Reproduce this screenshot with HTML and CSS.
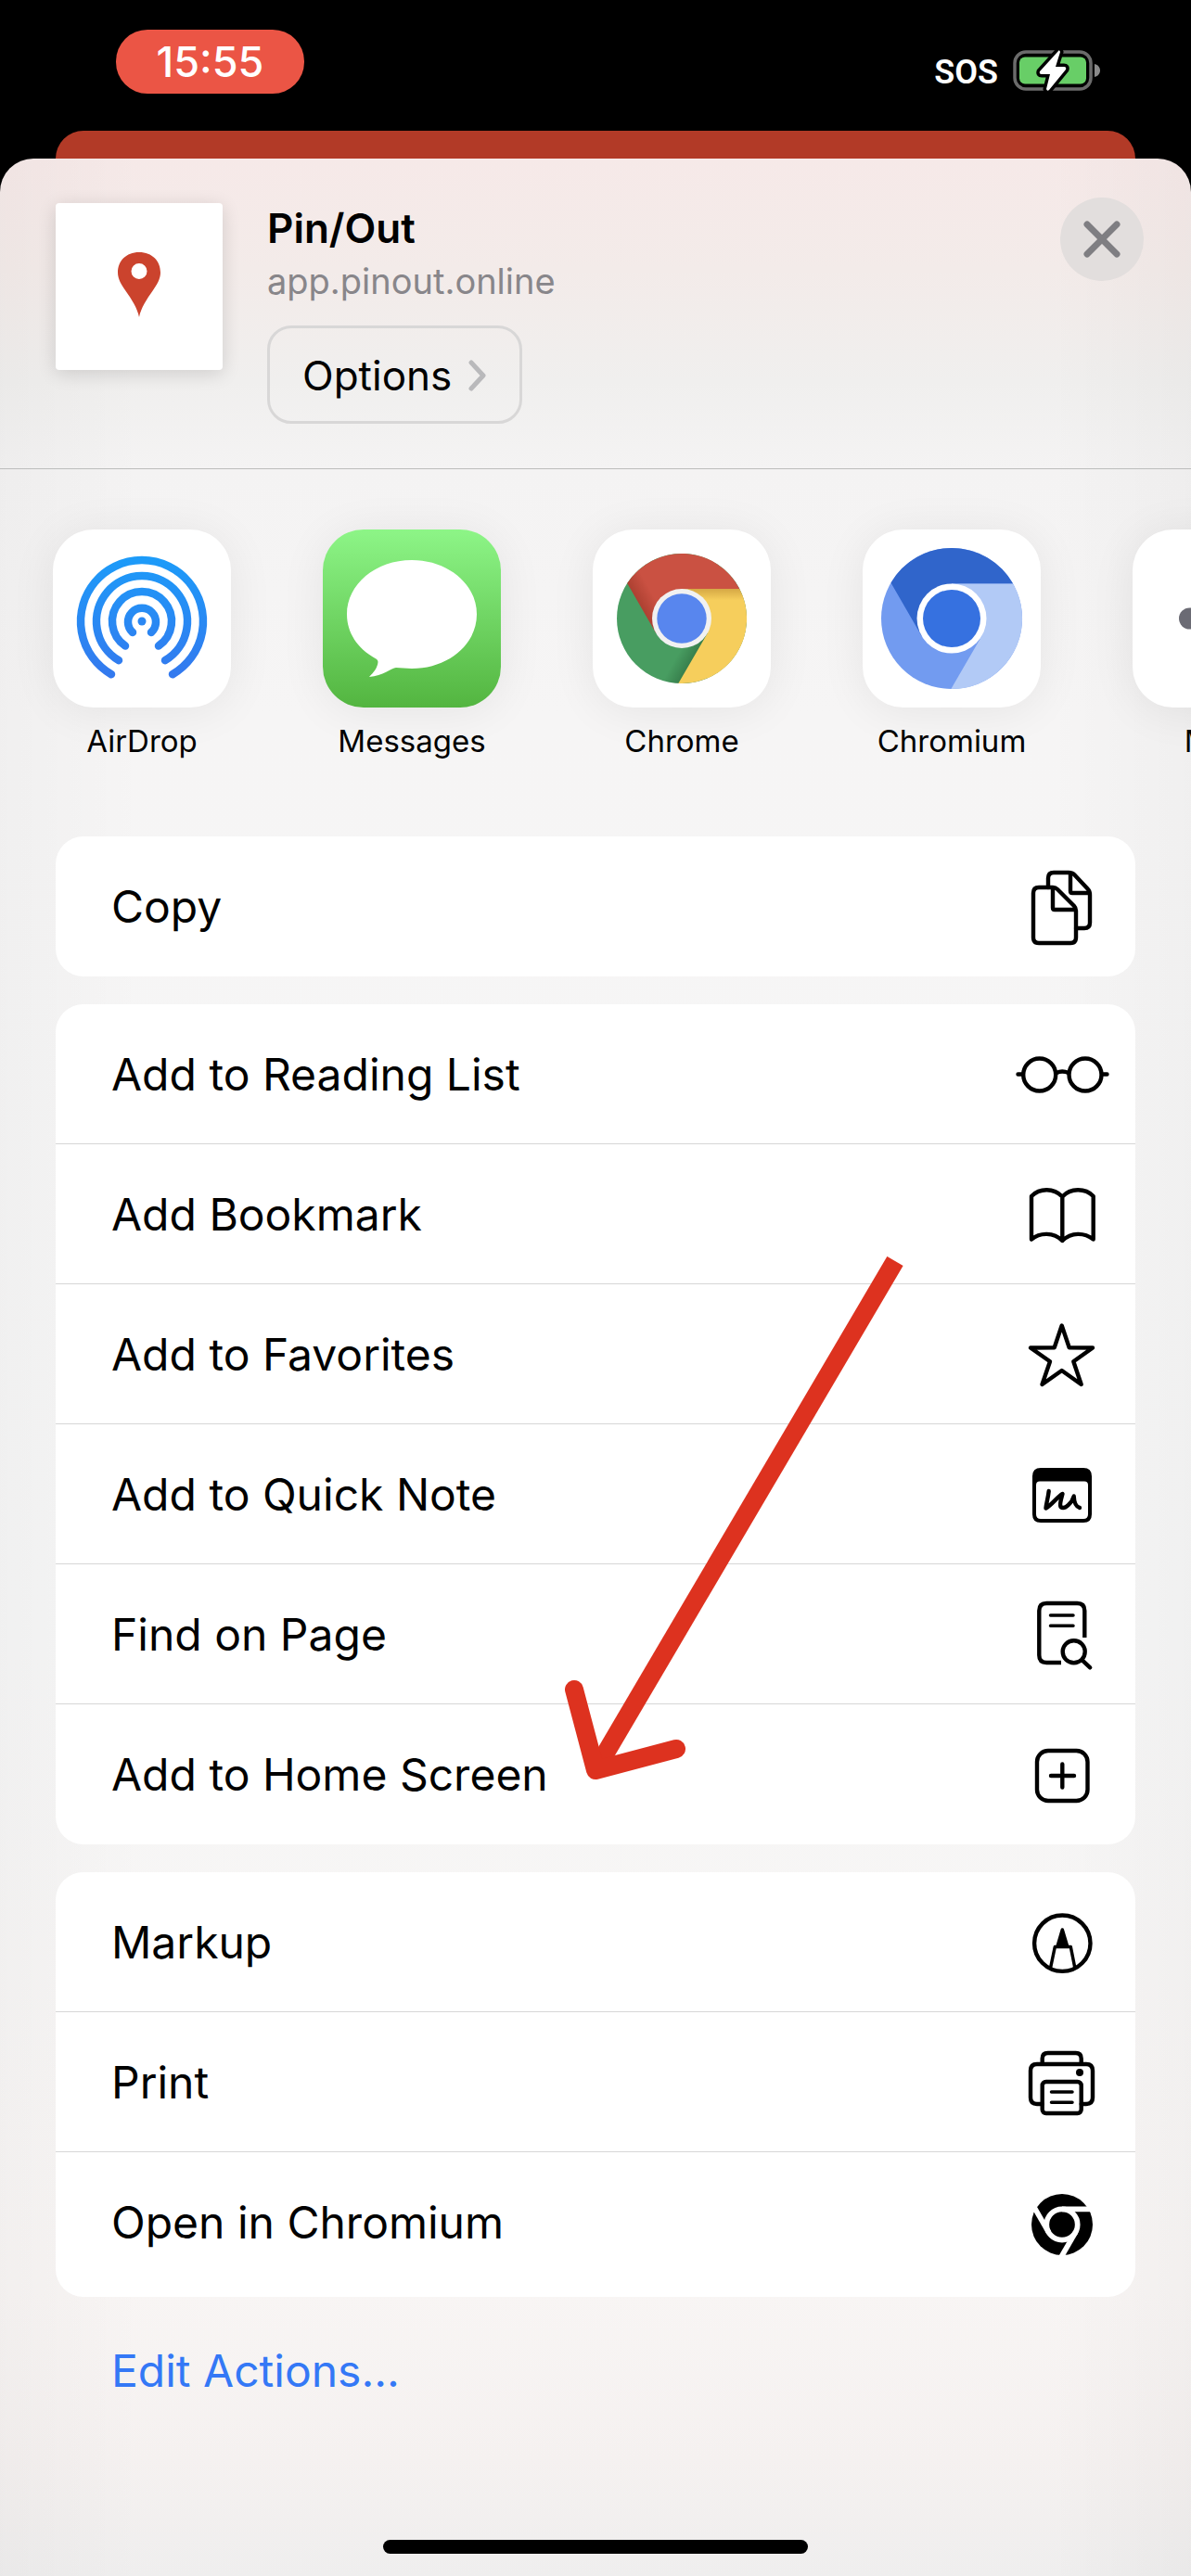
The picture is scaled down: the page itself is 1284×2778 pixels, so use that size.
FILE: index.html
```html
<!DOCTYPE html>
<html lang="en">
  <head>
    <meta charset="UTF-8" />
    <meta name="viewport" content="width=device-width, initial-scale=1.0" />
    <title>Pin/Out</title>
    <link rel="stylesheet" href="styles.css">
  </head>
  <body>
    <div class="status">
      <span class="time">15:55</span>
      <div class="status_right">
        <span class="sos">SOS</span>
        <svg class="battery" width="96" height="46" viewBox="0 0 96 46">
          <rect x="2" y="3" width="82" height="40" rx="12" fill="none" stroke="#6b6b6b" stroke-width="3.5" />
          <rect x="7" y="8.500" width="72" height="29" rx="6" fill="#68ce67" />
          <path d="M88 16c4 1 6 4 6 7s-2 6-6 7z" fill="#8a8a8a" />
          <path d="M49 2L29 24q-1 3 2 3h9l-4 16q1 3 3 1l18-22q1-3-2-3h-9l5-16q-1-3-2-1z" fill="#fff" stroke="#000" stroke-width="7" paint-order="stroke" />
        </svg>
      </div>
    </div>
    <div class="back_page"></div>

    <main class="sheet">
      <header class="head">
        <div class="thumb">
          <svg width="46" height="70" viewBox="0 0 46 70">
            <path fill="#cb432d" fill-rule="evenodd" d="M23 0C9 0 0 9.500 0 22c0 7 4 13 8 19 7 10 13 19 15 29 2-10 8-19 15-29 4-6 8-12 8-19C46 9.500 37 0 23 0zm0 12a8.500 8.500 0 1 1 0 17 8.500 8.500 0 0 1 0-17z" />
          </svg>
        </div>
        <div class="info">
          <h1>Pin/Out</h1>
          <p>app.pinout.online</p>
          <button type="button" class="options">
            Options
            <svg width="20" height="34" viewBox="0 0 20 34">
              <path d="M3 3l13 14L3 31" fill="none" stroke="#b9b9bb" stroke-width="5" stroke-linecap="round" stroke-linejoin="round" />
            </svg>
          </button>
        </div>
        <button type="button" class="close" aria-label="Close">
          <svg width="40" height="40" viewBox="0 0 40 40">
            <path d="M4 4l32 32M36 4L4 36" stroke="#7f7e82" stroke-width="7" stroke-linecap="round" />
          </svg>
        </button>
      </header>

      <div class="apps">
        <button type="button" class="app">
          <svg class="app_icon" viewBox="0 0 192 192">
            <defs>
              <linearGradient id="air" gradientUnits="userSpaceOnUse" x1="0" y1="28" x2="0" y2="162">
                <stop offset="0" stop-color="#1c9cf9" />
                <stop offset="1" stop-color="#3478ee" />
              </linearGradient>
            </defs>
            <g fill="none" stroke="url(#air)" stroke-width="8.500" stroke-linecap="round">
              <path d="M63 156.200A66 66 0 1 1 129 156.200" />
              <path d="M71 141.200A49 49 0 1 1 121 141.200" />
              <path d="M78 125.500A32 32 0 1 1 114 125.500" />
              <path d="M86 111A15 15 0 1 1 106 111" />
            </g>
            <circle cx="96" cy="99" r="4.500" fill="#2a87f3" />
          </svg>
          <span>AirDrop</span>
        </button>
        <button type="button" class="app">
          <svg class="app_icon messages" viewBox="0 0 192 192">
            <path fill="#fff" d="M96 33c39 0 70 26 70 58.500S135 150 96 150c-6 0-12-1-17-1-5 0-14 9-29 10 5-5 9-10 9.500-16 0-2-1-3-3-4C37 128 26 111 26 91.500 26 59 57 33 96 33z" />
          </svg>
          <span>Messages</span>
        </button>
        <button type="button" class="app">
          <svg class="app_icon" viewBox="0 0 192 192">
            <defs>
              <linearGradient id="shadeY" x1="0" y1="0" x2="0" y2="1">
                <stop offset="0" stop-color="#d5a845" />
                <stop offset="0.120" stop-color="#f6ce5c" />
              </linearGradient>
              <linearGradient id="shadeR" gradientUnits="userSpaceOnUse" x1="52" y1="85" x2="68" y2="76">
                <stop offset="0" stop-color="#ac4031" />
                <stop offset="1" stop-color="#ca5142" />
              </linearGradient>
              <linearGradient id="shadeG" gradientUnits="userSpaceOnUse" x1="108" y1="139" x2="94" y2="131">
                <stop offset="0" stop-color="#38804d" />
                <stop offset="1" stop-color="#489d61" />
              </linearGradient>
            </defs>
            <circle cx="96" cy="96" r="70" fill="url(#shadeG)" />
            <path fill="url(#shadeR)" d="M158.300 64A70 70 0 0 0 37.200 58L68.300 112 96 96V64z" />
            <path fill="url(#shadeY)" d="M158.300 64A70 70 0 0 1 92.300 166L123.700 112 96 96V64z" />
            <circle cx="96" cy="96" r="32" fill="#f1f1f1" />
            <circle cx="96" cy="96" r="26.700" fill="#5886ee" />
          </svg>
          <span>Chrome</span>
        </button>
        <button type="button" class="app">
          <svg class="app_icon" viewBox="0 0 192 192">
            <circle cx="96" cy="96" r="76" fill="#729bf0" />
            <path fill="#3065cb" d="M162.200 58.500A76 76 0 0 0 30.500 57.400L63.500 114.700 96 96V58.500z" />
            <path fill="#b2caf6" d="M162.200 58.500A76 76 0 0 1 95.300 172L128.500 114.700 96 96V58.500z" />
            <circle cx="96" cy="96" r="37.500" fill="#fff" />
            <circle cx="96" cy="96" r="31" fill="#3671e0" />
          </svg>
          <span>Chromium</span>
        </button>
        <button type="button" class="app">
          <svg class="app_icon" viewBox="0 0 192 192" fill="#6b6b74">
            <circle cx="61.500" cy="96" r="11.500" />
            <circle cx="96" cy="96" r="11.500" />
            <circle cx="130.500" cy="96" r="11.500" />
          </svg>
          <span>More</span>
        </button>
      </div>

      <ul class="actions">
        <li>
          <button type="button">
            Copy
            <svg class="icon" viewBox="0 0 102 102">
              <path d="M36 31V21q0-6 6-6h16q4 0 6 2l15 16q2 2 2 6v30q0 6-6 6h-9M60 16v19q0 2 2 2h18" />
              <path d="M26 31h15q3 0 5 2l18 18q2 2 2 5v29q0 6-6 6H26q-6 0-6-6V37q0-6 6-6zM41 32v21q0 2 2 2h22" />
            </svg>
          </button>
        </li>
      </ul>

      <ul class="actions">
        <li>
          <button type="button">
            Add to Reading List
            <svg class="icon" viewBox="0 0 102 102">
              <circle cx="26.700" cy="52" r="17.500" />
              <circle cx="76" cy="52" r="17.500" />
              <path d="M45 50q6-3 13 0M3.500 51.500H8M95 51.500h4.500" />
            </svg>
          </button>
        </li>
        <li>
          <button type="button">
            Add Bookmark
            <svg class="icon" viewBox="0 0 102 102">
              <path d="M18 32C27 23 42 23 51.300 32.500 60 23 76 23 84.700 32v46.500C75 71 61 70.500 51.300 80 42 70.500 27 71 18 78.500zM51.300 32.500V80" />
            </svg>
          </button>
        </li>
        <li>
          <button type="button">
            Add to Favorites
            <svg class="icon" viewBox="0 0 102 102">
              <path d="M50.700 20.500L58.700 44.300 84 44.500 63.300 59.300 71.700 84 50.700 69 29.500 84 38 59.300 17 44.500 42.700 44.300z" />
            </svg>
          </button>
        </li>
        <li>
          <button type="button">
            Add to Quick Note
            <svg class="icon" viewBox="0 0 102 102">
              <path fill="#000" stroke="none" fill-rule="evenodd" d="M28 23h46q9 0 9 9v41q0 9-9 9H28q-9 0-9-9V32q0-9 9-9zM27 37.500q-4 0-4 4V73q0 5 5 5h46q5 0 5-5V41.500q0-4-4-4z" />
              <path d="M36.700 48C36 55 34 61 33.500 66.500 40 63 46 54 51.500 51 50 57 48 62 49.500 65 54 69 62 60 63.700 53.500 64 60 66 65 70 66" />
            </svg>
          </button>
        </li>
        <li>
          <button type="button">
            Find on Page
            <svg class="icon" viewBox="0 0 102 102">
              <path d="M75.300 55V26q0-8-8-8h-33q-8 0-8 8v48q0 8 8 8H50" stroke-linecap="butt" />
              <path class="thin" d="M38.500 31H63M38.500 42.300H63" />
              <circle cx="63.700" cy="70.300" r="12" />
              <path d="M72.700 79.300l8.500 8" />
            </svg>
          </button>
        </li>
        <li>
          <button type="button">
            Add to Home Screen
            <svg class="icon" viewBox="0 0 102 102">
              <rect x="24" y="26" width="54.500" height="54" rx="12" />
              <path d="M39 53h25M51.300 40.500v25" />
            </svg>
          </button>
        </li>
      </ul>

      <ul class="actions last">
        <li>
          <button type="button">
            Markup
            <svg class="icon" viewBox="0 0 102 102">
              <circle cx="51.300" cy="52.700" r="30.200" />
              <path class="thin" d="M38.700 78.500l4.600-22h17l4.400 22" />
              <path class="thin" d="M51.300 38L46 56h10.700z" fill="#000" />
            </svg>
          </button>
        </li>
        <li>
          <button type="button">
            Print
            <svg class="icon" viewBox="0 0 102 102">
              <path d="M29.700 75H24q-7 0-7-7V39q0-7 7-7h53q7 0 7 7v29q0 7-7 7h-5.300M29.700 31v-5q0-6 6-6h30q6 0 6 6v5" />
              <rect x="29.700" y="51" width="42" height="34" rx="4" />
              <path class="thin" d="M39.500 62H62M39.500 73.300H62" />
              <circle cx="70" cy="41" r="4" fill="#000" stroke="none" />
            </svg>
          </button>
        </li>
        <li>
          <button type="button">
            Open in Chromium
            <svg class="icon" viewBox="0 0 102 102">
              <circle cx="51" cy="54" r="33" fill="#000" stroke="none" />
              <g stroke="#fff" stroke-width="5.700" stroke-linecap="butt">
                <circle cx="51" cy="54" r="16.700" />
                <path d="M51 37.300h36" />
                <path d="M51 37.300h36" transform="rotate(120 51 54)" />
                <path d="M51 37.300h36" transform="rotate(240 51 54)" />
              </g>
            </svg>
          </button>
        </li>
      </ul>

      <button type="button" class="edit">Edit Actions...</button>
      <div class="home_bar"></div>

      <!-- pointer to Add to Home Screen -->
      <svg class="arrow" width="370" height="570" viewBox="0 0 370 570" fill="none" stroke="#dd321f" stroke-width="20">
        <path d="M356 5L33 554" />
        <path d="M10 467l23 87 87-23" stroke-linecap="round" stroke-linejoin="round" />
      </svg>
    </main>
  </body>
</html>
```

FILE: styles.css
```css
* {
  padding: 0;
  margin: 0;
  box-sizing: border-box;
}
body {
  display: flex;
  flex-direction: column;
  min-height: 100vh;
  background-color: #000;
  color: #000;
  font-family: Inter, "Liberation Sans", sans-serif;
  overflow-x: hidden;
}
ul {
  list-style: none;
}
button {
  border: 0;
  background: none;
  color: inherit;
  font: inherit;
  cursor: pointer;
}
svg {
  display: block;
  flex: none;
}

/* status bar */
.status {
  display: flex;
  justify-content: space-between;
  align-items: flex-start;
  height: 141px;
  padding: 32px 96px 0 125px;
  color: #fff;
}
.time {
  width: 203px;
  border-radius: 34px;
  background: #eb5545;
  font-size: 45px;
  font-weight: 500;
  line-height: 69px;
  text-align: center;
}
.status_right {
  display: flex;
  align-items: center;
  gap: 16px;
  padding-top: 20px;
}
.sos {
  padding-top: 4px;
  font-family: Roboto, sans-serif;
  font-size: 36px;
  font-weight: 600;
  line-height: 44px;
}

.back_page {
  height: 30px;
  margin: 0 60px;
  border-radius: 30px 30px 0 0;
  background: #b23a27;
}

/* share sheet */
.sheet {
  position: relative;
  flex: 1;
  display: flex;
  flex-direction: column;
  border-radius: 36px 36px 0 0;
  background:
    linear-gradient(90deg, rgba(0, 0, 0, 0.025), transparent 12%, transparent 88%, rgba(0, 0, 0, 0.025)),
    linear-gradient(#f6e9e8, #f3ebe9 120px, #f0efee 240px, #f4f3f3 334px, #f6f5f5 600px, #f6f6f6 1600px, #f8f5f4 2300px, #f5f1f0 2480px, #efeeee);
}
.head {
  display: flex;
  align-items: flex-start;
  height: 335px;
  padding: 48px 51px 0 60px;
  border-bottom: 1px solid #bcbdbc;
}
.thumb {
  display: flex;
  align-items: center;
  justify-content: center;
  width: 180px;
  height: 180px;
  padding-bottom: 5px;
  border-radius: 4px;
  background: #fff;
  box-shadow: 0 4px 20px rgba(0, 0, 0, 0.14);
}
.info {
  flex: 1;
  margin-left: 48px;
}
.info h1 {
  font-size: 44px;
  font-weight: 600;
  line-height: 54px;
}
.info p {
  color: #88868a;
  font-size: 38px;
  line-height: 60px;
}
.options {
  display: flex;
  align-items: center;
  gap: 18px;
  height: 106px;
  margin-top: 18px;
  padding: 2px 35px 0;
  border: 3px solid #d8d7d7;
  border-radius: 26px;
  font-size: 44px;
}
.close {
  display: flex;
  align-items: center;
  justify-content: center;
  width: 90px;
  height: 90px;
  margin-top: -6px;
  border-radius: 50%;
  background: #e2dedd;
}

.apps {
  display: flex;
  gap: 99px;
  padding: 65px 0 83px 57px;
  overflow: hidden;
}
.app {
  display: flex;
  flex: none;
  flex-direction: column;
  align-items: center;
  width: 192px;
  font-size: 33px;
  line-height: 40px;
}
.app_icon {
  width: 192px;
  height: 192px;
  margin-bottom: 16px;
  border-radius: 44px;
  background: #fff;
  box-shadow: 0 4px 50px rgba(0, 0, 0, 0.07);
}
.messages {
  background: linear-gradient(#8df587, #53b540);
}

.actions {
  margin: 0 60px 30px;
  border-radius: 30px;
  background: #fff;
}
.actions li {
  height: 151px;
  border-bottom: 1px solid #d6d6d6;
}
.actions li:last-child {
  border-bottom-color: transparent;
}
.actions button {
  display: flex;
  align-items: center;
  justify-content: space-between;
  width: 100%;
  height: 150px;
  padding: 0 28px 0 60px;
  font-size: 48px;
  text-align: left;
}
.actions.last {
  margin-bottom: 50px;
  padding-bottom: 5px;
}
.icon {
  width: 102px;
  height: 102px;
  fill: none;
  stroke: #000;
  stroke-width: 4.4px;
  stroke-linecap: round;
  stroke-linejoin: round;
}
.icon .thin {
  stroke-width: 3.5px;
}
.edit {
  align-self: flex-start;
  margin-left: 120px;
  color: #3478f6;
  font-size: 48px;
  line-height: 60px;
}
.home_bar {
  width: 458px;
  height: 15px;
  margin: auto auto 24px;
  border-radius: 8px;
  background: #000;
}
.arrow {
  position: absolute;
  left: 609px;
  top: 1184px;
}
```
